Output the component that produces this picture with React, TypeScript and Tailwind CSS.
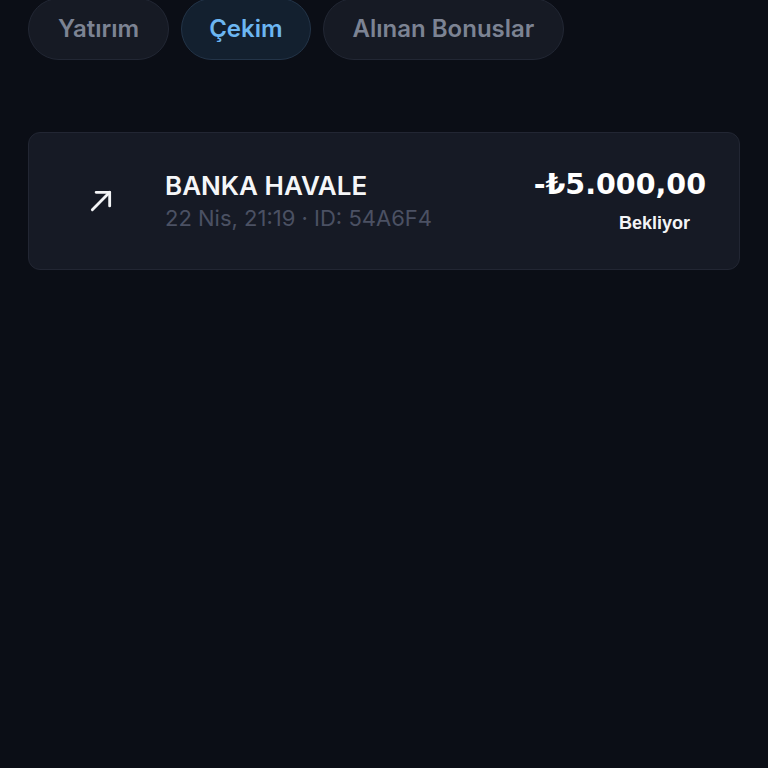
import React from "react";

function ArrowUpRight() {
  return (
    <svg width="26" height="26" viewBox="0 0 24 24" fill="none" stroke="#f3f4f6" strokeWidth="2.6" strokeLinecap="round" strokeLinejoin="round">
      <path d="M4 20 20 4" />
      <path d="M7.5 4H20v12.5" />
    </svg>
  );
}

export default function App() {
  return (
    <div className="min-h-[768px] w-full bg-[#0b0e16] overflow-hidden" style={{ fontFamily: "Inter, 'Noto Sans', sans-serif" }}>
      <div className="flex gap-3 pl-7 -mt-[2px]">
        <div className="h-[62px] px-[29px] rounded-full bg-[#161a24] border border-[#222734] flex items-center text-[24px] font-semibold text-[#7c8393]">Yatırım</div>
        <div className="h-[62px] px-[27px] rounded-full bg-[#13202f] border border-[#233448] flex items-center text-[24px] font-semibold text-[#6cb6f2]">Çekim</div>
        <div className="h-[62px] px-[29px] rounded-full bg-[#161a24] border border-[#222734] flex items-center text-[24px] font-semibold text-[#7c8393]">Alınan Bonuslar</div>
      </div>
      <div className="mx-7 mt-[72px] h-[138px] rounded-[12px] bg-[#161a25] border border-[#222633] flex items-center pl-[59px] pr-[33px]">
        <div className="w-[26px] flex justify-center"><ArrowUpRight /></div>
        <div className="ml-[51px] flex flex-col mt-[2px]">
          <div className="text-[26px] font-semibold text-[#f5f6f8] leading-[32px]">BANKA HAVALE</div>
          <div className="text-[22px] text-[#4b5163] leading-[32px]">22 Nis, 21:19 · ID: 54A6F4</div>
        </div>
        <div className="ml-auto flex flex-col items-end">
          <div className="text-[28.5px] font-bold text-white leading-[36px]" style={{ fontFamily: "'DejaVu Sans', sans-serif" }}>-₺5.000,00</div>
          <div className="text-[18px] font-bold text-[#f3f4f6] leading-[24px] mt-[8px] mr-[16px]" style={{ fontFamily: "'Liberation Sans', Arial, sans-serif" }}>Bekliyor</div>
        </div>
      </div>
    </div>
  );
}
